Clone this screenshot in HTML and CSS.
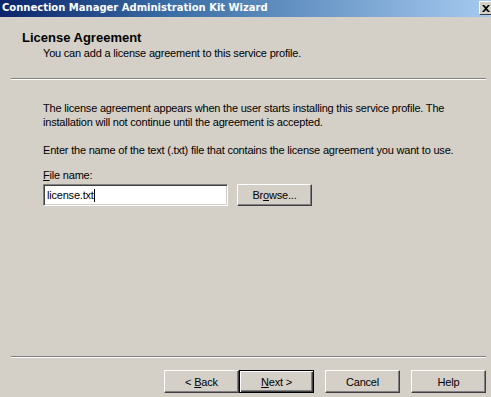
FILE: index.html
```html
<!DOCTYPE html>
<html lang="en">
<head>
  <meta charset="UTF-8">
  <title>Connection Manager Administration Kit Wizard</title>
  <link rel="stylesheet" href="styles.css">
</head>
<body>
  <div class="window">
    <div class="titlebar">
      <span class="title">Connection Manager Administration Kit Wizard</span>
      <span class="close-btn">
        <svg viewBox="0 0 8 7" width="8" height="7">
          <path d="M0 0h2l2 2 2-2h2L5 3.5 8 7H6L4 5 2 7H0l3-3.5z" fill="#000"/>
        </svg>
      </span>
    </div>

    <div class="header">
      <div class="header-title">License Agreement</div>
      <div class="header-sub">You can add a license agreement to this service profile.</div>
    </div>
    <div class="separator"></div>

    <div class="content">
      <p class="para">The license agreement appears when the user starts installing this service profile. The installation will not continue until the agreement is accepted.</p>
      <p class="para para-2">Enter the name of the text (.txt) file that contains the license agreement you want to use.</p>
      <div class="label"><u>F</u>ile name:</div>
      <div class="file-row">
        <div class="textbox">license.txt<span class="caret"></span></div>
        <div class="btn browse-btn"><span>Br<u>o</u>wse...</span></div>
      </div>
    </div>

    <div class="footer">
      <div class="separator"></div>
      <div class="button-row">
        <div class="btn"><span>&lt; <u>B</u>ack</span></div>
        <div class="btn btn-default"><span><u>N</u>ext &gt;</span></div>
        <div class="btn btn-cancel"><span>Cancel</span></div>
        <div class="btn btn-help"><span>Help</span></div>
      </div>
    </div>
  </div>
</body>
</html>
```

FILE: styles.css
```css
/* base */
* {
  margin: 0;
  padding: 0;
  box-sizing: border-box;
}

body {
  background-color: #d4d0c8;
  font-family: "Liberation Sans", Arial, sans-serif;
  font-size: 11px;
  line-height: 13px;
  letter-spacing: -0.2px;
  color: #000;
}

.window {
  width: 491px;
  height: 397px;
  display: flex;
  flex-direction: column;
}

/* title bar */
.titlebar {
  height: 17px;
  display: flex;
  justify-content: space-between;
  align-items: flex-start;
  background: linear-gradient(to right, #0a246a 0%, #3a6ea5 35%, #a6caf0 100%);
  color: #fff;
}

.title {
  font-family: "DejaVu Sans", sans-serif;
  font-weight: bold;
  font-size: 10px;
  line-height: 16px;
  padding-left: 2px;
  letter-spacing: 0;
}

.close-btn {
  width: 14px;
  height: 14px;
  margin-top: 1px;
  margin-right: -2px;
  background-color: #d4d0c8;
  border: 1px solid;
  border-color: #fff #404040 #404040 #fff;
  display: flex;
  justify-content: center;
  align-items: center;
}

/* header */
.header {
  padding: 13px 0 0 22px;
  height: 61px;
}

.header-title {
  font-weight: bold;
  font-size: 13px;
  line-height: 16px;
  letter-spacing: 0;
}

.header-sub {
  padding-left: 21px;
  margin-top: 1px;
}

.separator {
  margin: 0 5px 0 11px;
  border-top: 1px solid #808080;
  border-bottom: 1px solid #fff;
}

/* content */
.content {
  padding: 22px 0 0 43px;
}

.para {
  width: 420px;
  line-height: 13.5px;
}

.para-2 {
  margin-top: 15px;
  width: 440px;
}

.label {
  margin-top: 11px;
}

.file-row {
  display: flex;
  margin-top: 2px;
  gap: 9px;
}

.textbox {
  width: 185px;
  height: 22px;
  background-color: #fff;
  border: 1px solid;
  border-color: #808080 #fff #fff #808080;
  box-shadow: inset 1px 1px #404040, inset -1px -1px #d4d0c8;
  padding: 4px 0 0 3px;
  display: flex;
  align-items: flex-start;
}

.caret {
  display: inline-block;
  width: 1px;
  height: 13px;
  background-color: #000;
}

/* buttons */
.btn {
  width: 75px;
  height: 23px;
  border: 1px solid;
  border-color: #fff #404040 #404040 #fff;
  box-shadow: inset -1px -1px #808080;
  display: flex;
  justify-content: center;
  align-items: center;
  padding-top: 1px;
}

.browse-btn {
  height: 22px;
}

.btn-default {
  border-color: #000;
  box-shadow: inset 1px 1px #fff, inset -1px -1px #404040, inset -2px -2px #808080;
}

/* footer */
.footer {
  margin-top: auto;
  padding-bottom: 4px;
}

.button-row {
  display: flex;
  justify-content: flex-end;
  padding: 12px 5px 0 0;
}

.btn-cancel {
  margin-left: 11px;
}

.btn-help {
  margin-left: 11px;
}
```
